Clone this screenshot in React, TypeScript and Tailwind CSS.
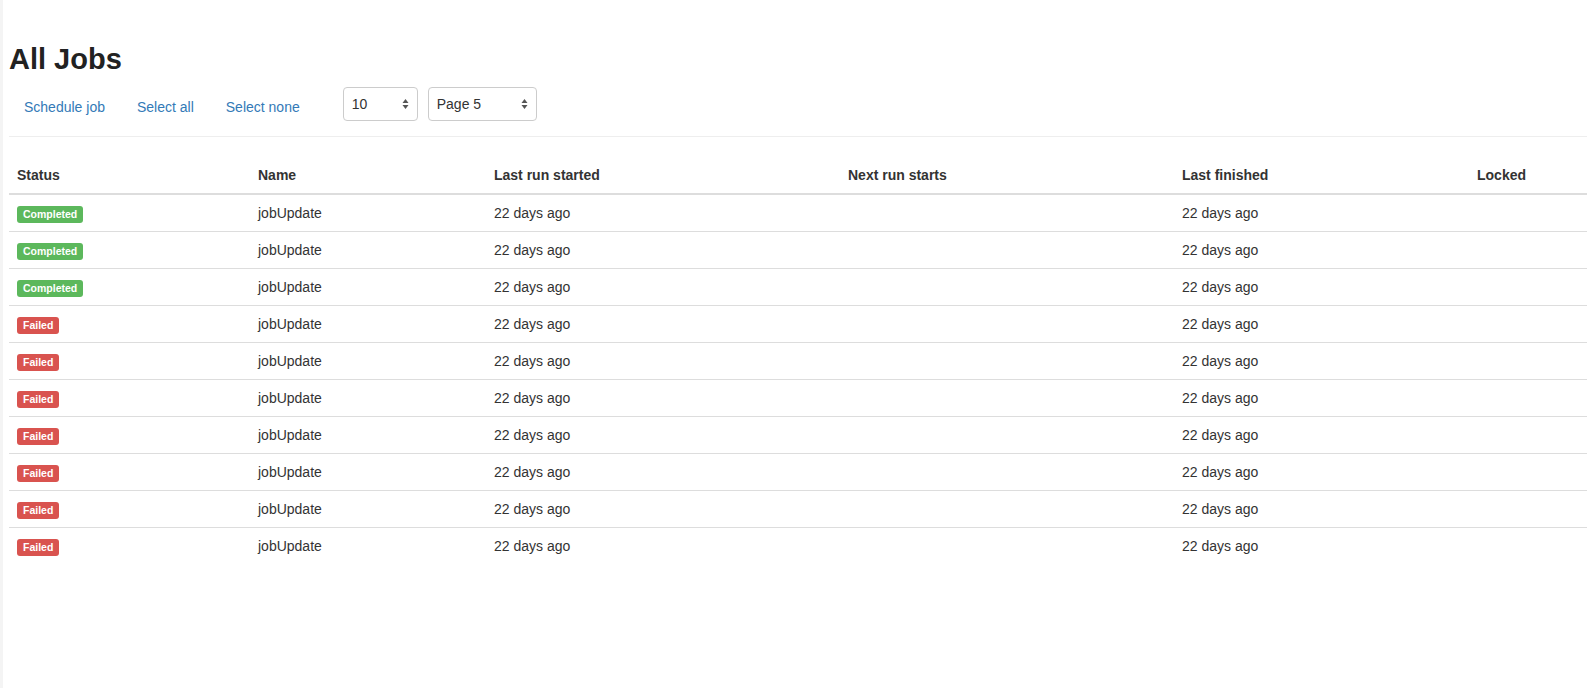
import * as React from "react";

type Job = { status: "Completed" | "Failed"; name: string; lastRun: string; nextRun: string; lastFinished: string; locked: string };

const jobs: Job[] = [
  ...Array.from({ length: 3 }, () => ({ status: "Completed" as const, name: "jobUpdate", lastRun: "22 days ago", nextRun: "", lastFinished: "22 days ago", locked: "" })),
  ...Array.from({ length: 7 }, () => ({ status: "Failed" as const, name: "jobUpdate", lastRun: "22 days ago", nextRun: "", lastFinished: "22 days ago", locked: "" })),
];

function StatusLabel({ status }: { status: Job["status"] }) {
  const color = status === "Completed" ? "bg-[#5cb85c]" : "bg-[#d9534f]";
  return (
    <span className={`${color} inline-block rounded-[3px] px-[6px] pt-[3px] pb-[3px] text-[10.5px] font-bold leading-none text-white`}>
      {status}
    </span>
  );
}

function Arrows() {
  return (
    <svg width="7" height="11" viewBox="0 0 7 11" className="absolute right-[8px] top-1/2 -translate-y-1/2">
      <path d="M3.5 0.5 L6.5 4.5 H0.5 Z" fill="#555" />
      <path d="M3.5 10.5 L6.5 6.5 H0.5 Z" fill="#555" />
    </svg>
  );
}

function SelectBox({ label, width }: { label: string; width: string }) {
  return (
    <div className={`relative h-[34px] ${width} rounded-[4px] border border-[#ccc] bg-white pl-[8px] pt-[6px] text-[14px] leading-[20px] text-[#333]`}>
      {label}
      <Arrows />
    </div>
  );
}

const th = "border-b-2 border-[#ddd] px-[8px] py-[8px] text-left font-bold leading-[20px]";

function Cell({ first, children }: { first: boolean; children?: React.ReactNode }) {
  return (
    <td className={`${first ? "" : "border-t border-[#ddd]"} px-[8px] py-[8px] align-middle leading-[20px]`}>
      {children}
    </td>
  );
}

export default function App() {
  return (
    <div className="min-h-[688px] bg-white font-['Liberation_Sans',Arial,sans-serif] text-[14px] text-[#333]">
      <div className="min-h-[688px] border-l-[3px] border-[#f4f4f4] pl-[6px]">
        <h2 className="pt-[43px] pb-[9px] text-[29px] font-bold leading-[33px] text-[#222]">All Jobs</h2>
        <div className="flex items-start">
          <a className="px-[15px] pt-[12px] pb-[8px] leading-[20px] text-[#337ab7]">Schedule job</a>
          <a className="ml-[2px] px-[15px] pt-[12px] pb-[8px] leading-[20px] text-[#337ab7]">Select all</a>
          <a className="ml-[2px] px-[15px] pt-[12px] pb-[8px] leading-[20px] text-[#337ab7]">Select none</a>
          <div className="mt-[2px] ml-[28px] flex gap-[10px]">
            <SelectBox label="10" width="w-[75px]" />
            <SelectBox label="Page 5" width="w-[109px]" />
          </div>
        </div>
        <hr className="mt-[11px] mb-[20px] border-t border-[#eee]" />
        <table className="w-full table-fixed border-collapse">
          <thead>
            <tr>
              <th className={`${th} w-[241px]`}>Status</th>
              <th className={`${th} w-[236px]`}>Name</th>
              <th className={`${th} w-[354px]`}>Last run started</th>
              <th className={`${th} w-[334px]`}>Next run starts</th>
              <th className={`${th} w-[295px]`}>Last finished</th>
              <th className={th}>Locked</th>
            </tr>
          </thead>
          <tbody>
            {jobs.map((job, index) => (
              <tr key={index}>
                <Cell first={index === 0}>
                  <StatusLabel status={job.status} />
                </Cell>
                <Cell first={index === 0}>{job.name}</Cell>
                <Cell first={index === 0}>{job.lastRun}</Cell>
                <Cell first={index === 0}>{job.nextRun}</Cell>
                <Cell first={index === 0}>{job.lastFinished}</Cell>
                <Cell first={index === 0}>{job.locked}</Cell>
              </tr>
            ))}
          </tbody>
        </table>
      </div>
    </div>
  );
}
